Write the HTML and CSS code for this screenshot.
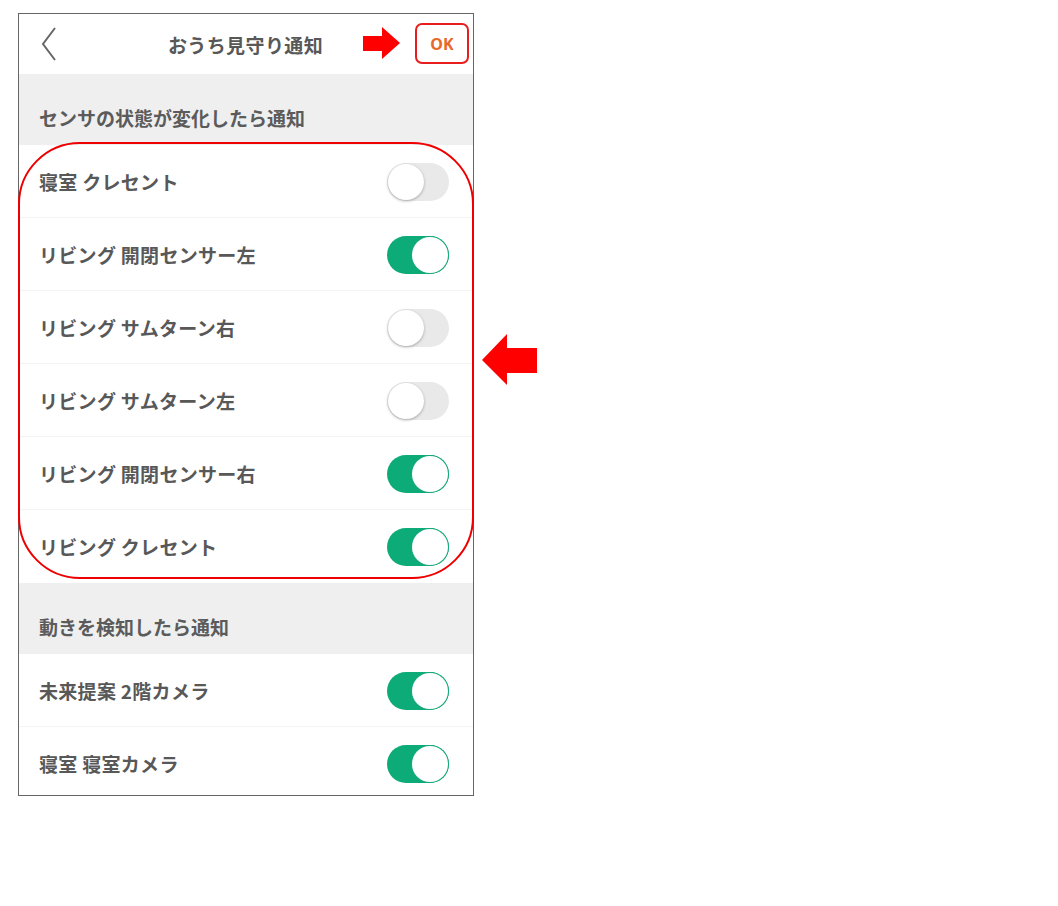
FILE: index.html
```html
<!DOCTYPE html>
<html lang="ja">
<head>
<meta charset="utf-8">
<link rel="stylesheet" href="styles.css">
</head>
<body>
<div class="stage">
  <div class="phone">
    <header class="topbar">
      <svg class="back" width="16" height="34" viewBox="0 0 16 34"><path d="M14 1 L2 17 L14 33" fill="none" stroke="#666" stroke-width="2"/></svg>
      <h1 class="title">おうち見守り通知</h1>
      <button class="ok">OK</button>
    </header>
    <div class="section">センサの状態が変化したら通知</div>
    <ul class="list">
      <li class="row"><span>寝室 クレセント</span><span class="toggle"></span></li>
      <li class="row"><span>リビング 開閉センサー左</span><span class="toggle on"></span></li>
      <li class="row"><span>リビング サムターン右</span><span class="toggle"></span></li>
      <li class="row"><span>リビング サムターン左</span><span class="toggle"></span></li>
      <li class="row"><span>リビング 開閉センサー右</span><span class="toggle on"></span></li>
      <li class="row"><span>リビング クレセント</span><span class="toggle on"></span></li>
    </ul>
    <div class="section">動きを検知したら通知</div>
    <ul class="list">
      <li class="row"><span>未来提案 2階カメラ</span><span class="toggle on"></span></li>
      <li class="row"><span>寝室 寝室カメラ</span><span class="toggle on"></span></li>
    </ul>
  </div>
  <div class="highlight"></div>
  <svg class="arrow-right" width="38" height="33" viewBox="0 0 38 33"><polygon points="0,9 19,9 19,0 37,16 19,32 19,24 0,24" fill="#ff0000"/></svg>
  <svg class="arrow-left" width="56" height="52" viewBox="0 0 56 52"><polygon points="0,26 25,0 25,14 55,14 55,39 25,39 25,51" fill="#ff0000"/></svg>
</div>
</body>
</html>
```
FILE: styles.css
```css
* { box-sizing: border-box; }
html, body { margin: 0; padding: 0; background: #fff; }
body { font-family: "Noto Sans CJK JP", "Noto Sans", sans-serif; color: #575757; }
.stage { position: relative; width: 1058px; height: 906px; padding: 13px 0 0 18px; }
.phone {
  width: 456px; height: 783px;
  border: 1px solid #666;
  overflow: hidden;
  background: #fff;
}
.topbar {
  height: 60px;
  display: flex; align-items: center;
  padding: 0 4px 0 22px;
  position: relative;
}
.back { display: block; }
.title {
  flex: 1; margin: 0; text-align: center;
  font-size: 19px; font-weight: 700; color: #585858;
  letter-spacing: 0.4px;
  padding-left: 19px;
  padding-right: 0;
}
.ok {
  width: 54px; height: 41px;
  border: 2px solid #e81d1d; border-radius: 7px;
  background: #fff;
  color: #e8682a;
  font-family: "Noto Sans", sans-serif;
  font-size: 16px; font-weight: 700;
  padding: 0;
  margin-top: -1px;
}
.section {
  height: 71px;
  background: #efefef;
  padding: 30px 0 0 20px;
  font-size: 19px; font-weight: 700; color: #5b5b5b;
  line-height: 28px;
}
.list { list-style: none; margin: 0; padding: 0; }
.row {
  height: 73px;
  display: flex; align-items: center; justify-content: space-between;
  padding: 0 24px 0 20px;
  border-bottom: 1px solid #f4f4f4;
  font-size: 19px; font-weight: 700; color: #585858;
  letter-spacing: 0.3px;
}
.row:last-child { border-bottom: none; }
.toggle {
  width: 62px; height: 38px; border-radius: 19px;
  background: #e9e9e9;
  position: relative;
  margin-top: 1px;
}
.toggle::after {
  content: ""; position: absolute; top: 1px; left: 1px;
  width: 36px; height: 36px; border-radius: 50%;
  background: #fff;
  box-shadow: 0 1px 3px rgba(0,0,0,0.3);
}
.toggle.on { background: #0dab77; }
.toggle.on::after { left: 25px; box-shadow: 0 0 0 1px #1aa87a; }
.highlight {
  position: absolute; left: 18px; top: 142px;
  width: 456px; height: 437px;
  border: 2px solid #ee0000; border-radius: 62px;
}
.arrow-right { position: absolute; left: 363px; top: 27px; }
.arrow-left { position: absolute; left: 482px; top: 334px; }
```
